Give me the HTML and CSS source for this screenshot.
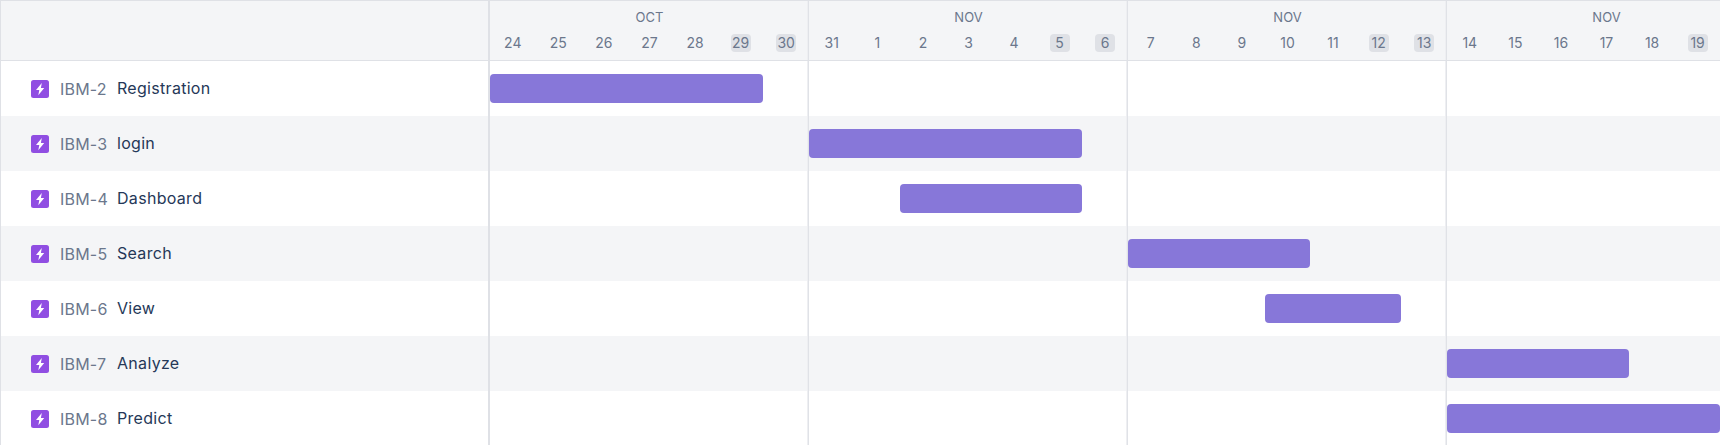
FILE: index.html
```html
<!DOCTYPE html>
<html lang="en">
<head>
<meta charset="utf-8">
<title>Roadmap</title>
<link rel="stylesheet" href="styles.css">
</head>
<body>
<svg class="defs" width="0" height="0" aria-hidden="true"><symbol id="epic" viewBox="0 0 18 18"><rect width="18" height="18" rx="2.5" fill="#904ee2"/><path d="M10.8 3 5 10h3.3l-1 5.2L13.2 8H9.9z" fill="#fff"/></symbol></svg>
<div class="gantt">
  <div class="head">
    <div class="corner"></div>
    <div class="weeks">
      <div class="week"><div class="month">OCT</div><div class="days"><span>24</span><span>25</span><span>26</span><span>27</span><span>28</span><span class="off">29</span><span class="off">30</span></div></div>
      <div class="week"><div class="month">NOV</div><div class="days"><span>31</span><span>1</span><span>2</span><span>3</span><span>4</span><span class="off">5</span><span class="off">6</span></div></div>
      <div class="week"><div class="month">NOV</div><div class="days"><span>7</span><span>8</span><span>9</span><span>10</span><span>11</span><span class="off">12</span><span class="off">13</span></div></div>
      <div class="week"><div class="month">NOV</div><div class="days"><span>14</span><span>15</span><span>16</span><span>17</span><span>18</span><span class="off">19</span><span class="off"></span></div></div>
    </div>
  </div>
  <div class="row">
    <div class="label"><svg class="icon"><use href="#epic"/></svg><span class="key">IBM-2</span><span class="title">Registration</span></div>
    <div class="track"><div class="bar s0 w6"></div></div>
  </div>
  <div class="row">
    <div class="label"><svg class="icon"><use href="#epic"/></svg><span class="key">IBM-3</span><span class="title">login</span></div>
    <div class="track"><div class="bar s7 w6"></div></div>
  </div>
  <div class="row">
    <div class="label"><svg class="icon"><use href="#epic"/></svg><span class="key">IBM-4</span><span class="title">Dashboard</span></div>
    <div class="track"><div class="bar s9 w4"></div></div>
  </div>
  <div class="row">
    <div class="label"><svg class="icon"><use href="#epic"/></svg><span class="key">IBM-5</span><span class="title">Search</span></div>
    <div class="track"><div class="bar s14 w4"></div></div>
  </div>
  <div class="row">
    <div class="label"><svg class="icon"><use href="#epic"/></svg><span class="key">IBM-6</span><span class="title">View</span></div>
    <div class="track"><div class="bar s17 w3"></div></div>
  </div>
  <div class="row">
    <div class="label"><svg class="icon"><use href="#epic"/></svg><span class="key">IBM-7</span><span class="title">Analyze</span></div>
    <div class="track"><div class="bar s21 w4"></div></div>
  </div>
  <div class="row">
    <div class="label"><svg class="icon"><use href="#epic"/></svg><span class="key">IBM-8</span><span class="title">Predict</span></div>
    <div class="track"><div class="bar s21 w6"></div></div>
  </div>
</div>
</body>
</html>
```
FILE: styles.css
```css
* { box-sizing: border-box; }
html, body { margin: 0; height: 445px; overflow: hidden; background: #fff; }
body { font-family: Inter, "Liberation Sans", sans-serif; }
.defs { position: absolute; }
.gantt { width: 1720px; height: 445px; overflow: hidden; border-left: 1px solid #dfe1e6; }
.head { display: flex; height: 61px; background: #f4f5f7; border-top: 1px solid #dfe1e6; border-bottom: 1px solid #dfe1e6; }
.corner { flex: 0 0 489px; border-right: 2px solid #dfe1e6; }
.weeks, .track { background-image: repeating-linear-gradient(to right, transparent 0, transparent 317px, #eeeff2 317px, #eeeff2 318px, #e0e2e7 318px, #e0e2e7 319px); }
.weeks { display: flex; flex: 0 0 auto; }
.week { flex: 0 0 319px; display: flex; flex-direction: column; }
.month { height: 33px; padding-top: 7px; text-align: center; font-size: 13px; line-height: 18px; color: #6b778c; }
.days { display: grid; grid-template-columns: repeat(7, 1fr); justify-items: center; }
.days span { width: 20px; height: 18px; border-radius: 4px; text-align: center; font-size: 14px; line-height: 18px; color: #6b778c; }
.days .off { background: #dfe1e6; }
.row { display: flex; height: 55px; }
.row:nth-child(odd) { background: #f4f5f7; }
.label { flex: 0 0 489px; display: flex; align-items: center; padding-left: 30px; border-right: 2px solid #dfe1e6; }
.icon { flex: 0 0 18px; width: 18px; height: 18px; }
.key { margin: 1px 0 0 11px; font-size: 16px; letter-spacing: .2px; color: #6b778c; width: 57px; }
.title { font-size: 16px; letter-spacing: .3px; color: #253858; margin-top: -2px; }
.track { flex: 0 0 1276px; display: grid; grid-template-columns: repeat(28, 1fr); align-items: center; }
.bar { height: 29px; border-radius: 4px; background: #8777d9; }
.s0 { grid-column-start: 1; }
.s7 { grid-column-start: 8; }
.s9 { grid-column-start: 10; }
.s14 { grid-column-start: 15; }
.s17 { grid-column-start: 18; }
.s21 { grid-column-start: 22; }
.w3 { grid-column-end: span 3; }
.w4 { grid-column-end: span 4; }
.w6 { grid-column-end: span 6; }
```
